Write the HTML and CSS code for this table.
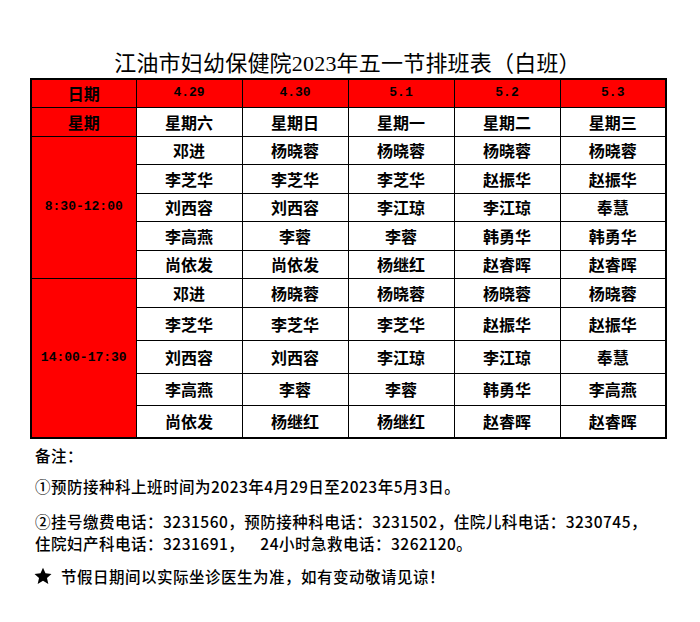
FILE: index.html
```html
<!DOCTYPE html>
<html lang="zh-CN">
<head>
<meta charset="utf-8">
<title>江油市妇幼保健院2023年五一节排班表（白班）</title>
<link rel="stylesheet" href="styles.css">
</head>
<body>
<div class="page">
  <h1 class="title">江油市妇幼保健院<span class="num">2023</span>年五一节排班表（白班）</h1>
  <table class="sched">
    <colgroup>
      <col class="c0"><col class="c1"><col class="c1"><col class="c1"><col class="c1"><col class="c1">
    </colgroup>
    <tr class="r-a head">
      <th class="red">日期</th><th class="red mono">4.29</th><th class="red mono">4.30</th><th class="red mono">5.1</th><th class="red mono">5.2</th><th class="red mono">5.3</th>
    </tr>
    <tr class="r-b">
      <th class="red">星期</th><td>星期六</td><td>星期日</td><td>星期一</td><td>星期二</td><td>星期三</td>
    </tr>
    <tr class="r-a">
      <th class="red mono" rowspan="5">8:30-12:00</th><td>邓进</td><td>杨晓蓉</td><td>杨晓蓉</td><td>杨晓蓉</td><td>杨晓蓉</td>
    </tr>
    <tr class="r-b"><td>李芝华</td><td>李芝华</td><td>李芝华</td><td>赵振华</td><td>赵振华</td></tr>
    <tr class="r-a"><td>刘西容</td><td>刘西容</td><td>李江琼</td><td>李江琼</td><td>奉慧</td></tr>
    <tr class="r-b"><td>李高燕</td><td>李蓉</td><td>李蓉</td><td>韩勇华</td><td>韩勇华</td></tr>
    <tr class="r-a"><td>尚依发</td><td>尚依发</td><td>杨继红</td><td>赵睿晖</td><td>赵睿晖</td></tr>
    <tr class="r-b">
      <th class="red mono" rowspan="5">14:00-17:30</th><td>邓进</td><td>杨晓蓉</td><td>杨晓蓉</td><td>杨晓蓉</td><td>杨晓蓉</td>
    </tr>
    <tr class="r-c"><td>李芝华</td><td>李芝华</td><td>李芝华</td><td>赵振华</td><td>赵振华</td></tr>
    <tr class="r-c"><td>刘西容</td><td>刘西容</td><td>李江琼</td><td>李江琼</td><td>奉慧</td></tr>
    <tr class="r-d"><td>李高燕</td><td>李蓉</td><td>李蓉</td><td>韩勇华</td><td>李高燕</td></tr>
    <tr class="r-c"><td>尚依发</td><td>杨继红</td><td>杨继红</td><td>赵睿晖</td><td>赵睿晖</td></tr>
  </table>
  <div class="notes">
    <p class="note-head">备注：</p>
    <p class="note n1">①预防接种科上班时间为2023年4月29日至2023年5月3日。</p>
    <p class="note n2">②挂号缴费电话：3231560，预防接种科电话：3231502，住院儿科电话：3230745，<br>住院妇产科电话：3231691，&nbsp;&nbsp;&nbsp;&nbsp;24小时急救电话：3262120。</p>
    <p class="note n3"><svg class="star" width="18" height="18" viewBox="0 0 24 24" aria-hidden="true"><path d="M12 1l3.3 7.4 8 .8-6 5.4 1.8 7.9L12 18.4l-7.1 4.1 1.8-7.9-6-5.4 8-.8z" fill="#000"/></svg>节假日期间以实际坐诊医生为准，如有变动敬请见谅！</p>
  </div>
</div>
</body>
</html>
```

FILE: styles.css
```css
html, body {
  margin: 0;
  padding: 0;
  background: #ffffff;
}

body {
  width: 700px;
  height: 622px;
  overflow: hidden;
  font-family: "Noto Sans CJK SC", "Noto Sans", sans-serif;
  color: #000;
}

.page {
  padding: 0 0 0 30px;
}

.title {
  margin: 0;
  padding-top: 46px;
  height: 32px;
  box-sizing: content-box;
  width: 635px;
  text-align: center;
  font-size: 22px;
  font-weight: 400;
  line-height: 30px;
  letter-spacing: 0.2px;
}

.title .num {
  font-family: "Liberation Serif", serif;
}

.sched {
  border-collapse: collapse;
  table-layout: fixed;
  width: 635px;
  border: 2px solid #000;
}

.c0 { width: 105px; }
.c1 { width: 106px; }

.sched th,
.sched td {
  border: 1px solid #000;
  padding: 0;
  text-align: center;
  vertical-align: middle;
  font-size: 16px;
  font-weight: 700;
  line-height: 18px;
}

.sched .red {
  background: #ff0000;
}

.sched .mono {
  font-family: "Liberation Mono", monospace;
  font-size: 13px;
  font-weight: 700;
}

.r-a { height: 28px; }
.r-b { height: 29px; }
.r-c { height: 33px; }
.r-d { height: 32px; }

.notes {
  padding-left: 5px;
  font-size: 15.5px;
  font-weight: 500;
  line-height: 22px;
  letter-spacing: 0.5px;
}

.notes p {
  margin: 0;
}

.note-head {
  padding-top: 5px;
}

.n1 {
  margin-top: 9px !important;
}

.n2 {
  margin-top: 13px !important;
}

.n3 {
  margin-top: 11px !important;
  display: flex;
  align-items: center;
}

.star {
  flex: none;
  margin: 0 9px 0 -1px;
  width: 18px;
  height: 18px;
}
```
